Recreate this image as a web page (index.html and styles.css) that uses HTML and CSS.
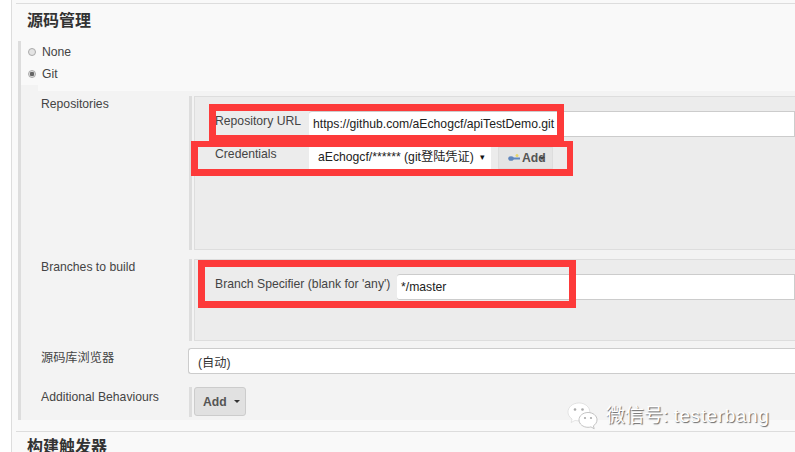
FILE: index.html
```html
<!DOCTYPE html>
<html lang="zh">
<head>
<meta charset="utf-8">
<title>源码管理</title>
<link rel="stylesheet" href="styles.css">
</head>
<body>
<div class="page">
  <section class="scm">
    <h2 class="heading heading-first">源码管理</h2>
    <div class="options">
      <label class="radio-row"><span class="radio"></span>None</label>
      <label class="radio-row"><span class="radio checked"></span>Git</label>
      <div class="notch"></div>
      <div class="panel">
        <div class="row">
          <div class="row-label label-top">Repositories</div>
          <div class="bar">
            <div class="box box-repo">
              <div class="field">
                <span class="field-label url-label">Repository URL</span>
                <div class="input">https://github.com/aEchogcf/apiTestDemo.git</div>
              </div>
              <div class="field">
                <span class="field-label cred-label">Credentials</span>
                <div class="select-mini">aEchogcf/****** (git登陆凭证)<span class="mini-caret">▾</span></div>
                <div class="btn-key">
                  <svg class="key" viewBox="0 0 12 8" width="12" height="8"><rect x="4" y="3.500" width="8" height="2" fill="#5f86bd"/><ellipse cx="3" cy="4.500" rx="2.800" ry="2.300" fill="#5f86bd"/><circle cx="9" cy="1.500" r="1.500" fill="#e8d66a"/></svg>Add<span class="over-caret"></span>
                </div>
              </div>
            </div>
          </div>
        </div>
        <div class="row row-branch">
          <div class="row-label label-top">Branches to build</div>
          <div class="bar">
            <div class="box box-branch">
              <div class="field">
                <span class="field-label branch-label">Branch Specifier (blank for 'any')</span>
                <div class="input">*/master</div>
              </div>
            </div>
          </div>
        </div>
        <div class="row row-browser">
          <div class="row-label browser-label">源码库浏览器</div>
          <div class="select-wide">(自动)</div>
        </div>
        <div class="row row-add">
          <div class="row-label">Additional Behaviours</div>
          <div class="bar bar-add">
            <div class="btn-add">Add<span class="caret"></span></div>
          </div>
        </div>
      </div>
    </div>
  </section>
  <section class="next">
    <h2 class="heading">构建触发器</h2>
  </section>
  <div class="annot annot-url"></div>
  <div class="annot annot-cred"></div>
  <div class="annot annot-branch"></div>
  <div class="watermark">
    <svg class="wechat" viewBox="0 0 32 28" width="32" height="28">
      <path d="M12 1C5.800 1 1 5 1 10c0 2.900 1.600 5.300 4.100 7l-1 3.500 4-2.100c1.100.3 2.400.5 3.700.5 6.100 0 11-4 11-8.900S18.100 1 12 1z" fill="#fff" stroke="#ccc" stroke-width=".5"/>
      <path d="M21 10.500c-5 0-9 3.300-9 7.400s4 7.400 9 7.400c1 0 2-.1 2.900-.4l3.300 1.800-.8-2.900c2.200-1.400 3.600-3.500 3.600-5.900 0-4.100-4-7.400-9-7.400z" fill="#fff" stroke="#aaa" stroke-width=".7"/>
      <circle cx="8" cy="7.500" r="1.300" fill="#aaa"/><circle cx="15.500" cy="7.500" r="1.300" fill="#aaa"/>
      <circle cx="18" cy="16" r="1.100" fill="#aaa"/><circle cx="24" cy="16" r="1.100" fill="#aaa"/>
    </svg>
    <span class="wm-text">微信号: <span class="wm-latin">testerbang</span></span>
  </div>
</div>
</body>
</html>
```
FILE: styles.css
```css
html, body { margin: 0; padding: 0; }
body {
  width: 795px;
  height: 452px;
  overflow: hidden;
  background: #fff;
  font-family: "Liberation Sans", "Noto Sans CJK SC", sans-serif;
  font-size: 12.2px;
  color: #333;
}
.page {
  position: relative;
  height: 449px;
  margin-left: 11px;
  padding-top: 3px;
  border-left: 1px solid #ddd;
  background: #f9f9f9;
  overflow: hidden;
}
.scm, .next {
  margin-left: 4px;
  border-top: 1px solid #ddd;
}
.heading {
  margin: 0;
  padding: 7px 0 0 11px;
  height: 30px;
  font-size: 16px;
  line-height: 22px;
  font-weight: bold;
  color: #333;
}
.heading-first { padding-top: 6px; height: 31px; }
.options {
  margin-left: 2px;
  border-left: 3px solid #ddd;
}
.radio-row {
  display: flex;
  align-items: center;
  height: 22px;
  padding-left: 7px;
  color: #444;
}
.radio {
  box-sizing: border-box;
  width: 8px;
  height: 8px;
  margin-right: 6px;
  border: 1px solid #aaa;
  border-radius: 50%;
  background: #e4e4e4;
}
.radio.checked { background: radial-gradient(circle, #666 0 2px, #ddd 2.500px); }
.notch { width: 17px; height: 6px; background: #f3f3f3; }
.panel {
  height: 324px;
  padding-top: 5px;
  background: #f3f3f3;
}
.row { display: flex; }
.row-label {
  box-sizing: border-box;
  flex: none;
  width: 168px;
  padding-left: 20px;
  line-height: 14px;
  color: #444;
}
.label-top { padding-top: 1px; }
.bar {
  flex: 1;
  min-width: 0;
  padding-left: 2px;
  border-left: 3px solid #ddd;
}
.box {
  padding: 14px 0 0 20px;
  border: 1px solid #ddd;
  border-right: 0;
  background: #ececec;
}
.box-repo { height: 138px; }
.box-branch { height: 66px; }
.field { display: flex; margin-bottom: 10px; }
.field-label { flex: none; line-height: 17px; color: #444; }
.url-label { width: 94px; margin-top: 2px; }
.cred-label { width: 94px; margin-top: -1px; }
.branch-label { width: 182px; margin-top: 2px; }
.input {
  box-sizing: border-box;
  flex: 1;
  height: 26px;
  padding-left: 4px;
  line-height: 25px;
  border: 1px solid #ccc;
  border-left: 0;
  border-radius: 3px 0 0 3px;
  background: #fff;
  color: #222;
  white-space: nowrap;
}
.select-mini {
  box-sizing: border-box;
  display: flex;
  justify-content: space-between;
  width: 182px;
  height: 22px;
  padding: 0 6px 0 9px;
  line-height: 21px;
  background: #fff;
  color: #222;
  white-space: nowrap;
}
.mini-caret { font-size: 9px; color: #111; }
.btn-key {
  box-sizing: border-box;
  position: relative;
  display: flex;
  align-items: center;
  width: 55px;
  height: 22px;
  margin-left: 7px;
  padding-left: 9px;
  border: 1px solid #ddd;
  background: #e4e4e4;
  font-weight: bold;
  color: #555;
}
.key { margin-right: 2px; }
.over-caret {
  position: absolute;
  right: 7px;
  top: 9px;
  border: 3px solid transparent;
  border-top-color: #444;
}
.row-branch { margin-top: 9px; }
.row-browser { margin-top: 7px; }
.browser-label { padding-top: 3px; width: 167px; }
.select-wide {
  box-sizing: border-box;
  flex: 1;
  height: 26px;
  padding-left: 9px;
  line-height: 28px;
  border: 1px solid #ccc;
  border-right: 0;
  border-radius: 3px 0 0 3px;
  background: #fff;
  color: #333;
}
.row-add { margin-top: 13px; }
.row-add .row-label { padding-top: 3px; }
.bar-add { height: 30px; }
.btn-add {
  box-sizing: border-box;
  display: flex;
  align-items: center;
  width: 52px;
  height: 29px;
  padding-left: 8px;
  border: 1px solid #ccc;
  border-radius: 3px;
  background: #e1e1e1;
  font-weight: bold;
  color: #555;
}
.caret {
  margin: 3px 0 0 7px;
  border: 3px solid transparent;
  border-top-color: #333;
}
.next { margin-top: 11px; }
.next .heading { padding-top: 4px; }
.annot {
  position: absolute;
  box-sizing: border-box;
  border: 7px solid #fd3a3a;
}
.annot-url { left: 197px; top: 104px; width: 355px; height: 38px; }
.annot-cred { left: 179px; top: 141px; width: 382px; height: 35px; border-width: 6px 6px 7px 7px; }
.annot-branch { left: 186px; top: 260px; width: 378px; height: 48px; }
.watermark {
  position: absolute;
  left: 555px;
  top: 402px;
  display: flex;
  align-items: center;
  gap: 7px;
  font-size: 19px;
  line-height: 28px;
  color: #fff;
  text-shadow: 1px 1px 1px #666;
  white-space: nowrap;
}
.wm-latin { letter-spacing: .6px; }
```
